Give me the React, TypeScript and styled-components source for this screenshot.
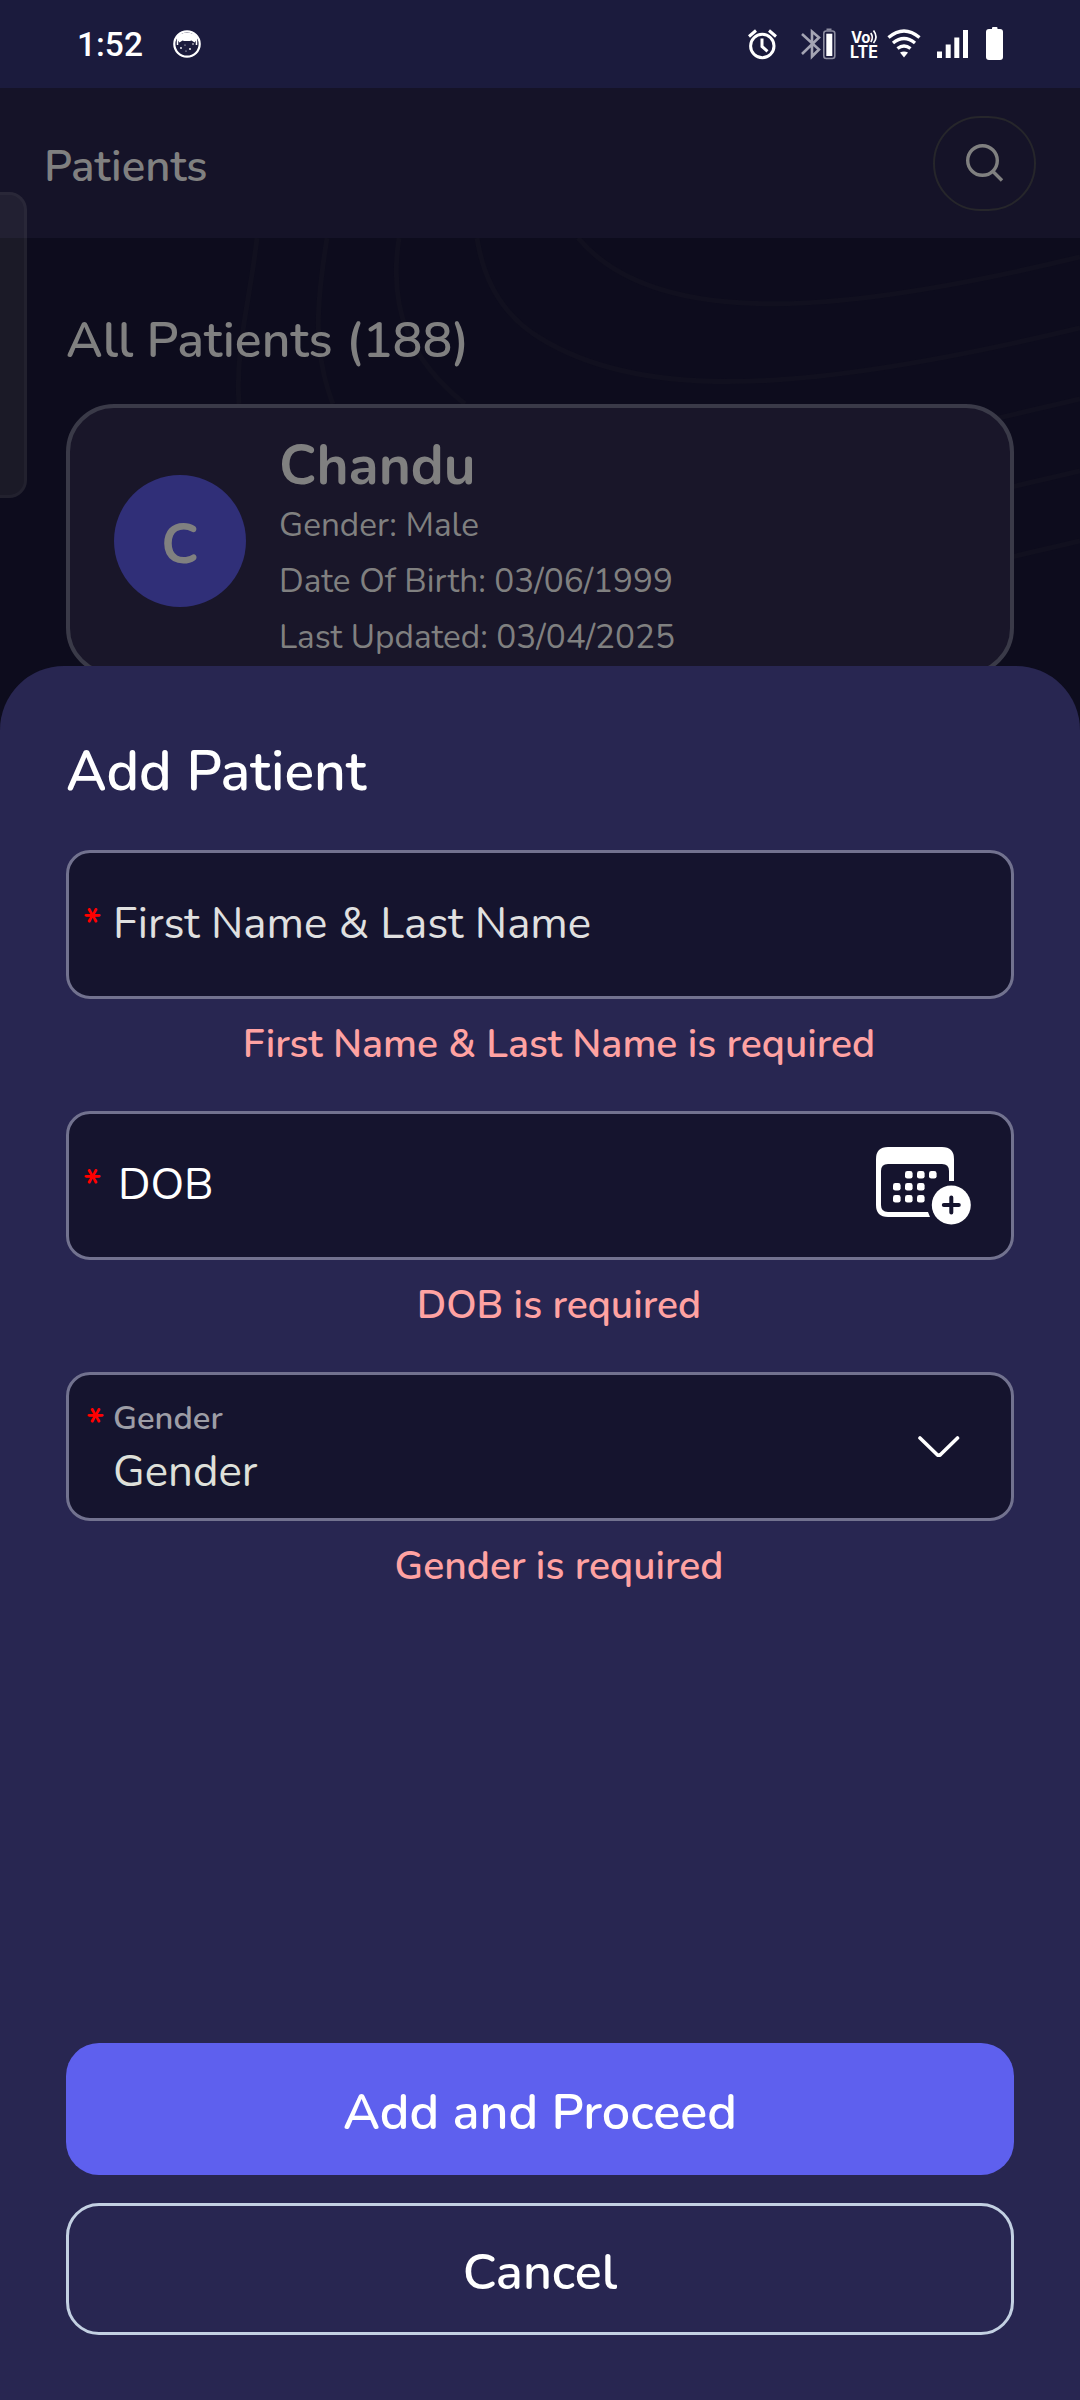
import React from "react";
import styled, { createGlobalStyle } from "styled-components";

const GlobalStyle = createGlobalStyle`
  * { box-sizing: border-box; }
  body { margin: 0; background: #0d0c1d; font-family: Nunito, Lato, "Open Sans", sans-serif; }
`;

const Screen = styled.div`
  position: relative;
  display: flex;
  flex-direction: column;
  width: 1080px;
  height: 2400px;
  overflow: hidden;
  background: #0d0c1d;
`;

/* Status bar */
const StatusBar = styled.div`
  display: flex;
  align-items: center;
  justify-content: space-between;
  height: 88px;
  flex: none;
  padding: 0 76px 0 77px;
  background: #1b1b3d;
  color: #fff;
`;
const StatusGroup = styled.div`
  display: flex;
  align-items: center;
`;
const Clock = styled.span`
  margin-top: 2px;
  font: 500 33.5px/40px Roboto, sans-serif;
`;
const StatusIcon = styled.svg<{ $gap?: number }>`
  display: block;
  flex: none;
  margin-left: ${(p) => p.$gap ?? 0}px;
  overflow: visible;
`;

/* Dimmed patients page */
const Header = styled.header`
  display: flex;
  align-items: center;
  justify-content: space-between;
  height: 150px;
  flex: none;
  padding: 0 44px;
  background: #151328;
`;
const HeaderTitle = styled.h1`
  margin: 7px 0 0;
  font-size: 43.8px;
  line-height: 60px;
  font-weight: 600;
  color: #808080;
`;
const SearchButton = styled.button`
  display: flex;
  align-items: center;
  justify-content: center;
  width: 103px;
  height: 95px;
  padding: 0;
  border: 2px solid #26262b;
  border-radius: 48px;
  background: none;
`;
const Content = styled.main`
  position: relative;
  flex: 1;
  padding: 69px 66px 0;
`;
const Contours = styled.svg`
  position: absolute;
  left: 0;
  top: 0;
`;
const SectionTitle = styled.h2`
  position: relative;
  margin: 0 0 29px;
  font-size: 49.9px;
  line-height: 68px;
  font-weight: 600;
  color: #808080;
`;
const PatientCard = styled.article`
  position: relative;
  display: flex;
  gap: 33px;
  height: 272px;
  padding: 28px 44px;
  border: 4px solid #3a3a48;
  border-radius: 48px;
  background: #191629;
  color: #808080;
`;
const Avatar = styled.div`
  display: flex;
  align-items: center;
  justify-content: center;
  width: 132px;
  height: 132px;
  margin-top: 39px;
  padding-top: 7px;
  border-radius: 50%;
  background: #302f78;
  font-size: 55px;
  font-weight: 700;
`;
const PatientInfo = styled.div`
  display: flex;
  flex-direction: column;
`;
const PatientName = styled.div`
  margin-bottom: 1px;
  font-size: 55px;
  line-height: 60px;
  font-weight: 700;
`;
const PatientDetail = styled.div`
  font-size: 33.3px;
  line-height: 56px;
`;
const EdgeHandle = styled.div`
  position: absolute;
  left: -24px;
  top: 192px;
  width: 51px;
  height: 306px;
  border: 3px solid rgba(255, 255, 255, 0.035);
  border-radius: 18px;
  background: rgba(200, 200, 180, 0.075);
`;

/* Bottom sheet */
const Sheet = styled.section`
  position: absolute;
  left: 0;
  right: 0;
  bottom: 0;
  display: flex;
  flex-direction: column;
  height: 1734px;
  padding: 68px 66px 65px;
  border-radius: 64px 64px 0 0;
  background: #282651;
  color: #fff;
`;
const SheetTitle = styled.h2`
  margin: 0 0 40px;
  font-size: 55.3px;
  line-height: 76px;
  font-weight: 600;
`;
const Field = styled.div`
  display: flex;
  align-items: center;
  height: 149px;
  flex: none;
  padding: 0 39px 0 14px;
  border: 3px solid #72728f;
  border-radius: 24px;
  background: #15142e;
`;
const Required = styled.span<{ $x?: number; $y?: number }>`
  width: 30px;
  flex: none;
  margin-top: ${(p) => p.$y ?? 0}px;
  padding-left: ${(p) => p.$x ?? 0}px;
  font-size: 41px;
  line-height: 40px;
  font-weight: 600;
  color: #f00;
`;
const FieldText = styled.span<{ $color: string; $indent?: number }>`
  flex: 1;
  margin-left: ${(p) => p.$indent ?? 0}px;
  padding-bottom: 2px;
  font-size: 43.8px;
  line-height: 60px;
  color: ${(p) => p.$color};
`;
const SelectText = styled.div`
  display: flex;
  flex: 1;
  flex-direction: column;
  padding-top: 6px;
`;
const FieldLabel = styled.span`
  font-size: 32.8px;
  line-height: 46px;
  font-weight: 600;
  color: #9d9da6;
`;
const ErrorText = styled.p`
  margin: 19px 0 41px;
  padding-left: 38px;
  font-size: 39.15px;
  line-height: 52px;
  font-weight: 600;
  text-align: center;
  color: #ffa2a2;
`;
const Actions = styled.div`
  display: flex;
  flex-direction: column;
  gap: 28px;
  margin-top: auto;
`;
const ActionButton = styled.button<{ $primary?: boolean }>`
  height: 132px;
  padding: 8px 0 0;
  border: ${(p) => (p.$primary ? "none" : "3px solid #c3d0e2")};
  border-radius: 33px;
  background: ${(p) => (p.$primary ? "#5e60ee" : "transparent")};
  font: 600 50.3px/68px Nunito, Lato, sans-serif;
  color: #fff;
`;
const ChevronSlot = styled.div`
  display: flex;
  margin-right: 12px;
`;

const CatIcon = () => (
  <StatusIcon $gap={30} width="28" height="28" viewBox="0 0 28 28">
    <circle cx="14" cy="14" r="12.7" fill="none" stroke="#fff" strokeWidth="2.2" />
    <path d="M3 8C7 1 21 1 25 8L21.500 12.500 18.500 10.500C17 11.200 11 11.200 9.500 10.500L6.500 12.500Z" fill="#fff" />
    <path d="M4.500 8v7M23.500 8v7" stroke="#fff" strokeWidth="1.500" />
    <g fill="#fff">
      <circle cx="8" cy="18" r=".9" />
      <circle cx="12" cy="15" r=".6" />
      <circle cx="17" cy="19" r=".9" />
      <circle cx="20" cy="14" r=".8" />
      <circle cx="13" cy="21" r=".6" />
    </g>
  </StatusIcon>
);

const AlarmIcon = () => (
  <StatusIcon width="29" height="30" viewBox="0 0 29 30">
    <g fill="none" stroke="#fff" strokeWidth="3">
      <circle cx="14.300" cy="17" r="11.700" />
      <path d="M1 7.500 8 1.500M28 7.500 21 1.500M14 9.500v8l5.500 4.800" />
    </g>
  </StatusIcon>
);

const BluetoothIcon = () => (
  <StatusIcon $gap={24} width="35" height="32" viewBox="0 0 35 32">
    <path d="M1 6 18 21.500 11 28.500V3.500L18 9.500 1 26" fill="none" stroke="#a4a4b3" strokeWidth="2.600" />
    <path d="M25.500 1.500h5" stroke="#8d8da0" strokeWidth="2" />
    <rect x="22.800" y="3" width="11" height="27.500" rx="2.500" fill="none" stroke="#8d8da0" strokeWidth="1.600" />
    <rect x="25.300" y="5.700" width="6" height="22.300" fill="#fff" />
  </StatusIcon>
);

const VolteIcon = () => (
  <StatusIcon $gap={15} width="27" height="30" viewBox="0 0 27 30">
    <g fill="#fff" fontFamily="Inter, sans-serif" fontWeight="700">
      <text x="0" y="13.500" fontSize="15.500" textLength="19.500" lengthAdjust="spacingAndGlyphs">Vo</text>
      <text x="-1" y="28.500" fontSize="17" textLength="28" lengthAdjust="spacingAndGlyphs">LTE</text>
    </g>
    <path d="M19.800 4q3 4.500 0 9M22.500 1.500q5 6.500 0 12.500" fill="none" stroke="#fff" strokeWidth="1.700" />
  </StatusIcon>
);

const WifiIcon = () => (
  <StatusIcon $gap={9} width="34" height="30" viewBox="0 0 34 30">
    <g fill="none" stroke="#fff" strokeWidth="3.400">
      <path d="M1.500 8.500Q17-4.500 32.500 8.500" />
      <path d="M6 14Q17 5 28 14" />
      <path d="M10.500 19.500Q17 14.500 23.500 19.500" />
    </g>
    <path d="M13 23.500q4-2 8 0L17 28.500Z" fill="#fff" />
  </StatusIcon>
);

const SignalIcon = () => (
  <StatusIcon $gap={16} width="31" height="30" viewBox="0 0 31 30" fill="#fff">
    <rect x="0" y="22.500" width="5" height="6.500" />
    <rect x="8.700" y="15.500" width="5" height="13.500" />
    <rect x="17.300" y="8.500" width="5" height="20.500" />
    <rect x="26" y="1" width="5" height="28" />
  </StatusIcon>
);

const BatteryIcon = () => (
  <StatusIcon $gap={18} width="18" height="34" viewBox="0 0 18 34" fill="#fff">
    <rect x="6" y="0" width="5.500" height="5" rx="1" />
    <rect x="0" y="2" width="17" height="31" rx="3" />
  </StatusIcon>
);

const SearchIcon = () => (
  <svg width="38" height="38" viewBox="0 0 38 38" fill="none" stroke="#808080" strokeWidth="3.400">
    <circle cx="16.500" cy="16.500" r="14.800" />
    <path d="M26.500 27 36 36.500" />
  </svg>
);

const CalendarAddIcon = () => (
  <svg width="96" height="78" viewBox="0 0 96 78">
    <path
      fill="#fff"
      fillRule="evenodd"
      d="M12 0H66Q78 0 78 12V34H73V24Q73 17 66 17H12Q5 17 5 24V58Q5 65 12 65H52L54 70H12Q0 70 0 58V12Q0 0 12 0Z"
    />
    <g fill="#fff">
      {[
        [29, 24], [41, 24], [53, 24],
        [17, 36], [29, 36], [41, 36],
        [17, 48], [29, 48], [41, 48],
      ].map(([x, y]) => (
        <rect key={`${x}-${y}`} x={x} y={y} width="7.600" height="7.600" rx="2.400" />
      ))}
      <circle cx="75.300" cy="58" r="19.500" />
    </g>
    <path d="M75.300 50.500v15M67.800 58h15" stroke="#15142e" strokeWidth="4" strokeLinecap="round" />
  </svg>
);

const ChevronDownIcon = () => (
  <svg width="42" height="24" viewBox="0 0 42 24" fill="none" stroke="#fff" strokeWidth="3.600" strokeLinecap="round" strokeLinejoin="round">
    <path d="M2 3 19 19.500Q20.800 21 22.600 19.500L39.500 3" />
  </svg>
);

const BackgroundContours = () => (
  <Contours width="1080" height="430" viewBox="0 238 1080 430" fill="none" stroke="#11101f" strokeWidth="5">
    <path d="M257 238C250 300 235 350 239 404" />
    <path d="M327 238C317 300 312 350 333 404" />
    <path d="M399 238C388 310 410 360 465 404" />
    <path d="M477 238C485 290 510 320 540 338C640 400 800 395 1080 328" />
    <path d="M578 238C660 335 860 310 1080 257" />
    <path d="M960 427 1080 399M960 499 1080 471M960 569 1080 541" />
  </Contours>
);

export default function App() {
  return (
    <Screen>
      <GlobalStyle />
      <StatusBar>
        <StatusGroup>
          <Clock>1:52</Clock>
          <CatIcon />
        </StatusGroup>
        <StatusGroup>
          <AlarmIcon />
          <BluetoothIcon />
          <VolteIcon />
          <WifiIcon />
          <SignalIcon />
          <BatteryIcon />
        </StatusGroup>
      </StatusBar>
      <Header>
        <HeaderTitle>Patients</HeaderTitle>
        <SearchButton aria-label="Search">
          <SearchIcon />
        </SearchButton>
      </Header>
      <Content>
        <BackgroundContours />
        <SectionTitle>All Patients (188)</SectionTitle>
        <PatientCard>
          <Avatar>C</Avatar>
          <PatientInfo>
            <PatientName>Chandu</PatientName>
            <PatientDetail>Gender: Male</PatientDetail>
            <PatientDetail>Date Of Birth: 03/06/1999</PatientDetail>
            <PatientDetail>Last Updated: 03/04/2025</PatientDetail>
          </PatientInfo>
        </PatientCard>
      </Content>
      <EdgeHandle />
      <Sheet>
        <SheetTitle>Add Patient</SheetTitle>
        <Field>
          <Required>*</Required>
          <FieldText $color="#e0e0e0">First Name &amp; Last Name</FieldText>
        </Field>
        <ErrorText>First Name &amp; Last Name is required</ErrorText>
        <Field>
          <Required>*</Required>
          <FieldText $color="#fff" $indent={5}>DOB</FieldText>
          <CalendarAddIcon />
        </Field>
        <ErrorText>DOB is required</ErrorText>
        <Field>
          <Required $x={3} $y={-43}>*</Required>
          <SelectText>
            <FieldLabel>Gender</FieldLabel>
            <FieldText $color="#dfe0da">Gender</FieldText>
          </SelectText>
          <ChevronSlot>
            <ChevronDownIcon />
          </ChevronSlot>
        </Field>
        <ErrorText>Gender is required</ErrorText>
        <Actions>
          <ActionButton $primary>Add and Proceed</ActionButton>
          <ActionButton>Cancel</ActionButton>
        </Actions>
      </Sheet>
    </Screen>
  );
}
